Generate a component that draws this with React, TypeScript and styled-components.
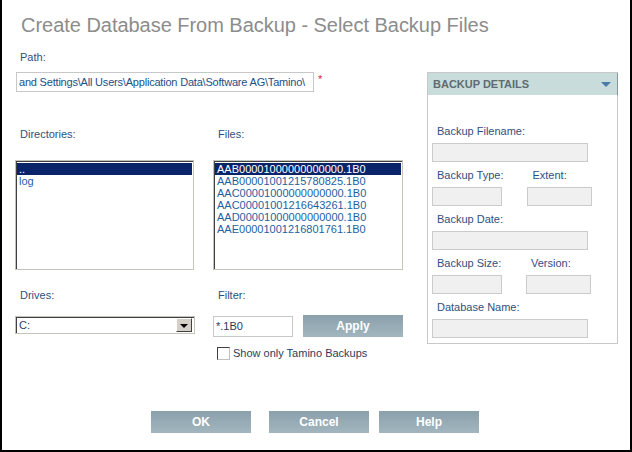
import styled, { createGlobalStyle } from 'styled-components';

const GlobalStyle = createGlobalStyle`
    html, body {
        margin: 0;
        padding: 0;
        background: #fff;
    }
    body {
        font-family: "Liberation Sans", Arial, sans-serif;
        font-size: 11px;
    }
    * {
        box-sizing: border-box;
    }
`;

const Frame = styled.div`
    width: 632px;
    height: 452px;
    border: 2px solid #000;
    border-top: none;
    display: flex;
    flex-direction: column;
    padding-left: 13px;
`;

const Title = styled.h1`
    margin: 14px 0 0 6px;
    font-size: 20px;
    line-height: 22px;
    font-weight: normal;
    letter-spacing: -0.03px;
    color: #8c8c8c;
`;

const Body = styled.div`
    display: flex;
    align-items: flex-start;
    margin-top: 15px;
`;

const LeftCol = styled.div`
    width: 388px;
`;

const Label = styled.div`
    padding-left: 5px;
    line-height: 13px;
    color: #2f4f80;
    white-space: nowrap;
`;

const PathRow = styled.div`
    display: flex;
    align-items: flex-start;
    margin: 8px 0 0 1px;
`;

const PathInput = styled.div`
    width: 298px;
    height: 20px;
    border: 1px solid #c8c8c8;
    padding: 0 2px;
    line-height: 18px;
    letter-spacing: -0.2px;
    color: #1c4f86;
    white-space: nowrap;
    overflow: hidden;
`;

const Required = styled.span`
    color: #e0202a;
    margin-left: 4px;
    line-height: 14px;
`;

const TwoCols = styled.div<{ $top: number }>`
    display: grid;
    grid-template-columns: 179px 190px;
    column-gap: 19px;
    margin-top: ${(p) => p.$top}px;
`;

const Column = styled.div`
    display: flex;
    flex-direction: column;
`;

const ListBox = styled.div`
    margin-top: 19px;
    height: 110px;
    border: 1px solid #c4c4bc;
    box-shadow: inset 1px 1px 0 #404040;
    padding: 2px 1px 1px 1px;
    background: #fff;
    overflow: hidden;
`;

const ListItem = styled.div<{ $selected?: boolean }>`
    line-height: 12px;
    height: 12px;
    padding-left: 2px;
    white-space: nowrap;
    color: ${(p) => (p.$selected ? '#fff' : '#1f5f9f')};
    background: ${(p) => (p.$selected ? '#0a246a' : 'transparent')};
`;

const Select = styled.div`
    margin-top: 14px;
    width: 180px;
    height: 18px;
    border: 1px solid #c4c4bc;
    box-shadow: inset 1px 1px 0 #404040;
    display: flex;
    align-items: center;
    justify-content: space-between;
    padding: 0 2px 0 3px;
    color: #1f3f6f;
`;

const DropButton = styled.div`
    width: 16px;
    height: 14px;
    background: #d4d0c8;
    border: 1px solid;
    border-color: #fff #404040 #404040 #fff;
    display: flex;
    align-items: center;
    justify-content: center;

    &::after {
        content: '';
        border-left: 4px solid transparent;
        border-right: 4px solid transparent;
        border-top: 4px solid #000;
        margin-top: 1px;
    }
`;

const FilterRow = styled.div`
    display: flex;
    align-items: flex-start;
    gap: 10px;
    margin-top: 13px;
`;

const FilterInput = styled.div`
    margin-top: 1px;
    width: 80px;
    height: 21px;
    border: 1px solid #c8c8c8;
    padding: 0 2px;
    line-height: 19px;
    color: #2a3a5a;
`;

const ActionButton = styled.button<{ $gap?: number }>`
    width: 100px;
    height: 22px;
    margin: 0 0 0 ${(p) => p.$gap ?? 0}px;
    padding: 0;
    border: none;
    background: linear-gradient(#8aa0ab, #a3b6bf);
    color: #fff;
    font-family: "Liberation Sans", Arial, sans-serif;
    font-size: 12px;
    font-weight: bold;
    cursor: pointer;
`;

const CheckRow = styled.label`
    display: flex;
    align-items: center;
    margin: 10px 0 0 4px;
    color: #2c3c5c;
    line-height: 13px;
`;

const CheckBox = styled.span`
    width: 13px;
    height: 13px;
    border: 1px solid;
    border-color: #404040 #c0c0c0 #c0c0c0 #404040;
    background: #fff;
    margin-right: 3px;
`;

const Panel = styled.div`
    margin: 21px 0 0 24px;
    width: 191px;
    border: 1px solid #c8c8c8;
    padding-bottom: 5px;
`;

const PanelHeader = styled.div`
    height: 22px;
    margin-right: -1px;
    background: #c9dcdc;
    border-right: 1px solid #8a9696;
    display: flex;
    align-items: center;
    justify-content: space-between;
    padding: 0 6px 0 5px;
    font-weight: bold;
    color: #5f6b6e;
`;

const Caret = styled.span`
    border-left: 5px solid transparent;
    border-right: 5px solid transparent;
    border-top: 5px solid #4a7aa8;
`;

const PanelBody = styled.div`
    padding: 6px 0 0 4px;
`;

const FieldRow = styled.div`
    display: flex;
    gap: 24px;
`;

const FieldGroup = styled.div<{ $first?: boolean }>`
    margin-top: ${(p) => (p.$first ? 24 : 7)}px;
`;

const ReadOnly = styled.div<{ $w: number }>`
    margin-top: 5px;
    width: ${(p) => p.$w}px;
    height: 19px;
    background: #f0f0f0;
    border: 1px solid #cbcbcb;
`;

const Footer = styled.div`
    margin-top: auto;
    padding: 0 0 17px 136px;
    display: flex;
`;

const directories = ['..', 'log'];
const files = [
    'AAB00001000000000000.1B0',
    'AAB00001001215780825.1B0',
    'AAC00001000000000000.1B0',
    'AAC00001001216643261.1B0',
    'AAD00001000000000000.1B0',
    'AAE00001001216801761.1B0',
];

const App = () => {
    return (
        <>
            <GlobalStyle />
            <Frame>
                <Title>Create Database From Backup - Select Backup Files</Title>
                <Body>
                    <LeftCol>
                        <Label>Path:</Label>
                        <PathRow>
                            <PathInput>and Settings\All Users\Application Data\Software AG\Tamino\</PathInput>
                            <Required>*</Required>
                        </PathRow>

                        <TwoCols $top={36}>
                            <Column>
                                <Label>Directories:</Label>
                                <ListBox>
                                    {directories.map((d, i) => (
                                        <ListItem key={d} $selected={i === 0}>
                                            {d}
                                        </ListItem>
                                    ))}
                                </ListBox>
                            </Column>
                            <Column>
                                <Label>Files:</Label>
                                <ListBox>
                                    {files.map((f, i) => (
                                        <ListItem key={f} $selected={i === 0}>
                                            {f}
                                        </ListItem>
                                    ))}
                                </ListBox>
                            </Column>
                        </TwoCols>

                        <TwoCols $top={19}>
                            <Column>
                                <Label>Drives:</Label>
                                <Select>
                                    <span>C:</span>
                                    <DropButton />
                                </Select>
                            </Column>
                            <Column>
                                <Label>Filter:</Label>
                                <FilterRow>
                                    <FilterInput>*.1B0</FilterInput>
                                    <ActionButton>Apply</ActionButton>
                                </FilterRow>
                                <CheckRow>
                                    <CheckBox />
                                    Show only Tamino Backups
                                </CheckRow>
                            </Column>
                        </TwoCols>
                    </LeftCol>

                    <Panel>
                        <PanelHeader>
                            <span>BACKUP DETAILS</span>
                            <Caret />
                        </PanelHeader>
                        <PanelBody>
                            <FieldGroup $first>
                                <Label>Backup Filename:</Label>
                                <ReadOnly $w={156} />
                            </FieldGroup>
                            <FieldGroup>
                                <FieldRow>
                                    <div>
                                        <Label>Backup Type:</Label>
                                        <ReadOnly $w={70} />
                                    </div>
                                    <div>
                                        <Label>Extent:</Label>
                                        <ReadOnly $w={65} />
                                    </div>
                                </FieldRow>
                            </FieldGroup>
                            <FieldGroup>
                                <Label>Backup Date:</Label>
                                <ReadOnly $w={156} />
                            </FieldGroup>
                            <FieldGroup>
                                <FieldRow>
                                    <div>
                                        <Label>Backup Size:</Label>
                                        <ReadOnly $w={70} />
                                    </div>
                                    <div>
                                        <Label>Version:</Label>
                                        <ReadOnly $w={65} />
                                    </div>
                                </FieldRow>
                            </FieldGroup>
                            <FieldGroup>
                                <Label>Database Name:</Label>
                                <ReadOnly $w={156} />
                            </FieldGroup>
                        </PanelBody>
                    </Panel>
                </Body>

                <Footer>
                    <ActionButton>OK</ActionButton>
                    <ActionButton $gap={18}>Cancel</ActionButton>
                    <ActionButton $gap={10}>Help</ActionButton>
                </Footer>
            </Frame>
        </>
    );
};

export default App;
